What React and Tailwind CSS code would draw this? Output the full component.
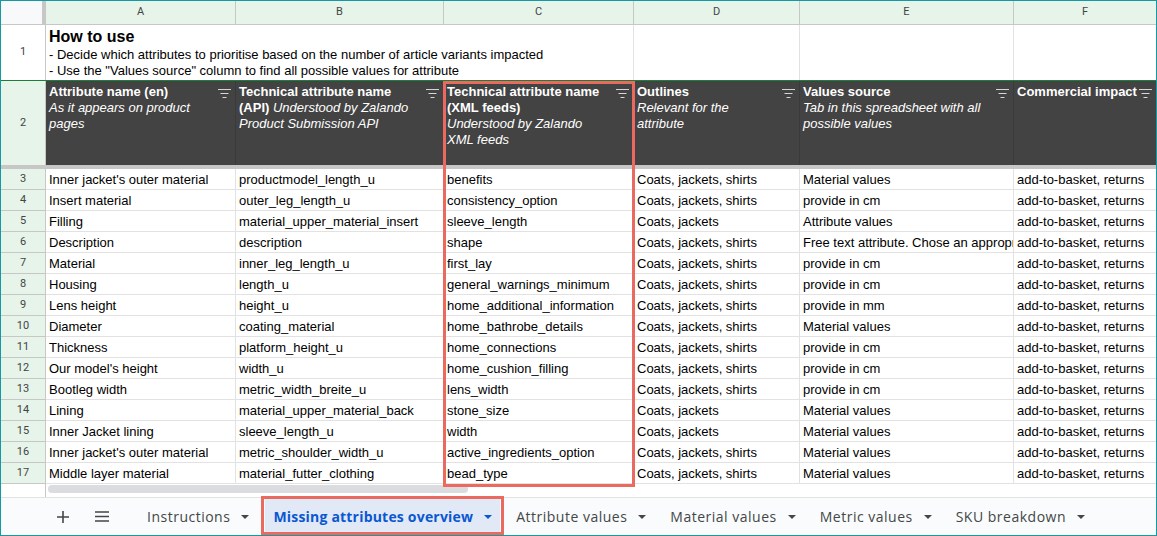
import React from "react";

const COLS = "grid grid-cols-[45px_190px_208px_190px_166px_214px_142px]";

const rows = [
  ["Inner jacket's outer material", "productmodel_length_u", "benefits", "Coats, jackets, shirts", "Material values"],
  ["Insert material", "outer_leg_length_u", "consistency_option", "Coats, jackets, shirts", "provide in cm"],
  ["Filling", "material_upper_material_insert", "sleeve_length", "Coats, jackets", "Attribute values"],
  ["Description", "description", "shape", "Coats, jackets, shirts", "Free text attribute. Chose an appropriate value"],
  ["Material", "inner_leg_length_u", "first_lay", "Coats, jackets, shirts", "provide in cm"],
  ["Housing", "length_u", "general_warnings_minimum", "Coats, jackets, shirts", "provide in cm"],
  ["Lens height", "height_u", "home_additional_information", "Coats, jackets, shirts", "provide in mm"],
  ["Diameter", "coating_material", "home_bathrobe_details", "Coats, jackets, shirts", "Material values"],
  ["Thickness", "platform_height_u", "home_connections", "Coats, jackets, shirts", "provide in cm"],
  ["Our model's height", "width_u", "home_cushion_filling", "Coats, jackets, shirts", "provide in cm"],
  ["Bootleg width", "metric_width_breite_u", "lens_width", "Coats, jackets, shirts", "provide in cm"],
  ["Lining", "material_upper_material_back", "stone_size", "Coats, jackets", "Material values"],
  ["Inner Jacket lining", "sleeve_length_u", "width", "Coats, jackets", "Material values"],
  ["Inner jacket's outer material", "metric_shoulder_width_u", "active_ingredients_option", "Coats, jackets, shirts", "Material values"],
  ["Middle layer material", "material_futter_clothing", "bead_type", "Coats, jackets, shirts", "Material values"],
];

function FilterIcon() {
  return (
    <svg width="13" height="9" viewBox="0 0 13 9" className="shrink-0">
      <path d="M0 0.5h13M2.5 4.5h8M4.5 8.5h4" stroke="#d6d6d6" strokeWidth="1" fill="none" />
    </svg>
  );
}

function Arrow({ color = "#444746" }) {
  return (
    <svg width="8" height="4" viewBox="0 0 8 4" className="shrink-0">
      <path d="M0 0h8L4 4z" fill={color} />
    </svg>
  );
}

function HeadCell({ children, last }) {
  return (
    <div className={"flex items-start pl-[3px] pr-[4px] pt-[3px] bg-[#434343] text-white text-[13px] leading-[16px] " + (last ? "" : "border-r border-[#3a3a3a]")}>
      <div className={(last ? "" : "flex-1 ") + "min-w-0 whitespace-nowrap"}>{children}</div>
      <div className={"pt-[5px] " + (last ? "ml-[5px]" : "")}>
        <FilterIcon />
      </div>
    </div>
  );
}

function Tab({ label, active }) {
  return (
    <div
      className={
        "h-full flex items-center gap-[11px] px-2 text-[14px] " +
        (active ? "bg-[#e1e9f7] text-[#0b57d0] font-bold" : "text-[#444746] font-medium")
      }
    >
      <span className={active ? "tracking-[0.2px]" : "tracking-[0.5px]"}>{label}</span>
      <Arrow color={active ? "#0b57d0" : "#444746"} />
    </div>
  );
}

export default function App() {
  return (
    <div className="relative w-[1157px] h-[536px] overflow-hidden border border-[#139aa3] bg-white font-['Liberation_Sans',Arial,sans-serif] text-black">
      {/* column header row */}
      <div className={COLS + " h-[24px] text-[11px] text-[#444] font-['Roboto',sans-serif]"}>
        <div className="bg-[#f8f9fa] border-r-[4px] border-[#c7c7c7] border-b border-b-[#c7c7c7]" />
        {["A", "B", "C", "D", "E", "F"].map((c, i) => (
          <div
            key={c}
            className={"flex items-center justify-center bg-[#e6f4ea] border-b border-[#c7c7c7] " + (i < 5 ? "border-r" : "")}
          >
            {c}
          </div>
        ))}
      </div>

      {/* row 1 */}
      <div className={COLS + " h-[55px]"}>
        <div className="flex items-center justify-center bg-white border-r border-[#c7c7c7] text-[11px] text-[#444] font-['Roboto',sans-serif]">
          1
        </div>
        <div className="col-span-3 border-r border-[#e2e2e2] pl-[3px] pt-[2px] whitespace-nowrap">
          <div className="text-[16px] font-bold leading-[20px]">How to use</div>
          <div className="text-[13px] leading-[16px]">- Decide which attributes to prioritise based on the number of article variants impacted</div>
          <div className="text-[13px] leading-[16px]">- Use the "Values source" column to find all possible values for attribute</div>
        </div>
        <div className="border-r border-[#e2e2e2]" />
        <div className="border-r border-[#e2e2e2]" />
        <div />
      </div>

      {/* row 2 header */}
      <div className={COLS + " h-[85px] border-t border-[#188038]"}>
        <div className="flex items-center justify-center bg-[#e6f4ea] border-r border-[#c7c7c7] text-[11px] text-[#444] font-['Roboto',sans-serif]">
          2
        </div>
        <HeadCell>
          <div className="font-bold">Attribute name (en)</div>
          <div className="italic">As it appears on product</div>
          <div className="italic">pages</div>
        </HeadCell>
        <HeadCell>
          <div className="font-bold">Technical attribute name</div>
          <div>
            <span className="font-bold">(API)</span> <span className="italic">Understood by Zalando</span>
          </div>
          <div className="italic">Product Submission API</div>
        </HeadCell>
        <HeadCell>
          <div className="font-bold">Technical attribute name</div>
          <div className="font-bold">(XML feeds)</div>
          <div className="italic">Understood by Zalando</div>
          <div className="italic">XML feeds</div>
        </HeadCell>
        <HeadCell>
          <div className="font-bold">Outlines</div>
          <div className="italic">Relevant for the</div>
          <div className="italic">attribute</div>
        </HeadCell>
        <HeadCell>
          <div className="font-bold">Values source</div>
          <div className="italic">Tab in this spreadsheet with all</div>
          <div className="italic">possible values</div>
        </HeadCell>
        <HeadCell last>
          <div className="font-bold">Commercial impact</div>
        </HeadCell>
      </div>

      {/* frozen divider */}
      <div className="h-[4px] bg-[#c7c7c7]" />

      {/* data rows */}
      {rows.map((r, i) => (
        <div key={i} className={COLS + " h-[21px] text-[13px]"}>
          <div className="flex items-center justify-center bg-[#e6f4ea] border-r border-b border-[#c7c7c7] text-[11px] text-[#444] font-['Roboto',sans-serif]">
            {i + 3}
          </div>
          {[...r, "add-to-basket, returns"].map((v, j) => (
            <div
              key={j}
              className={"flex items-end pb-[2px] leading-[15px] pl-[3px] whitespace-nowrap overflow-hidden border-b border-[#e2e2e2] " + (j < 5 ? "border-r" : "")}
            >
              {v}
            </div>
          ))}
        </div>
      ))}

      {/* scrollbar area */}
      <div className="h-[13px] flex">
        <div className="w-[45px] border-r border-[#c7c7c7]" />
        <div className="flex-1 pl-[2px] pt-[1px]">
          <div className="w-[420px] h-[8px] rounded-full bg-[#dadce0]" />
        </div>
      </div>

      {/* sheet tabs */}
      <div className="h-[38px] flex items-center bg-[#f9fbfd] border-t border-[#e1e3e1] font-['Open_Sans',sans-serif] pl-[56px]">
        <svg width="12" height="12" viewBox="0 0 12 12" className="shrink-0">
          <path d="M6 0v12M0 6h12" stroke="#444746" strokeWidth="1.6" />
        </svg>
        <svg width="14" height="11" viewBox="0 0 14 11" className="ml-[26px] shrink-0">
          <path d="M0 1h14M0 5.5h14M0 10h14" stroke="#444746" strokeWidth="1.6" />
        </svg>
        <div className="ml-[30px] h-full flex items-center gap-2">
          <Tab label="Instructions" />
          <Tab label="Missing attributes overview" active />
          <Tab label="Attribute values" />
          <Tab label="Material values" />
          <Tab label="Metric values" />
          <Tab label="SKU breakdown" />
        </div>
      </div>

      {/* annotation boxes */}
      <div className="absolute left-[442px] top-[80px] w-[192px] h-[406px] border-[3px] border-[#ea6a60] pointer-events-none" />
      <div className="absolute left-[260px] top-[495px] w-[243px] h-[39px] border-[3px] border-[#ea6a60] pointer-events-none" />
    </div>
  );
}
